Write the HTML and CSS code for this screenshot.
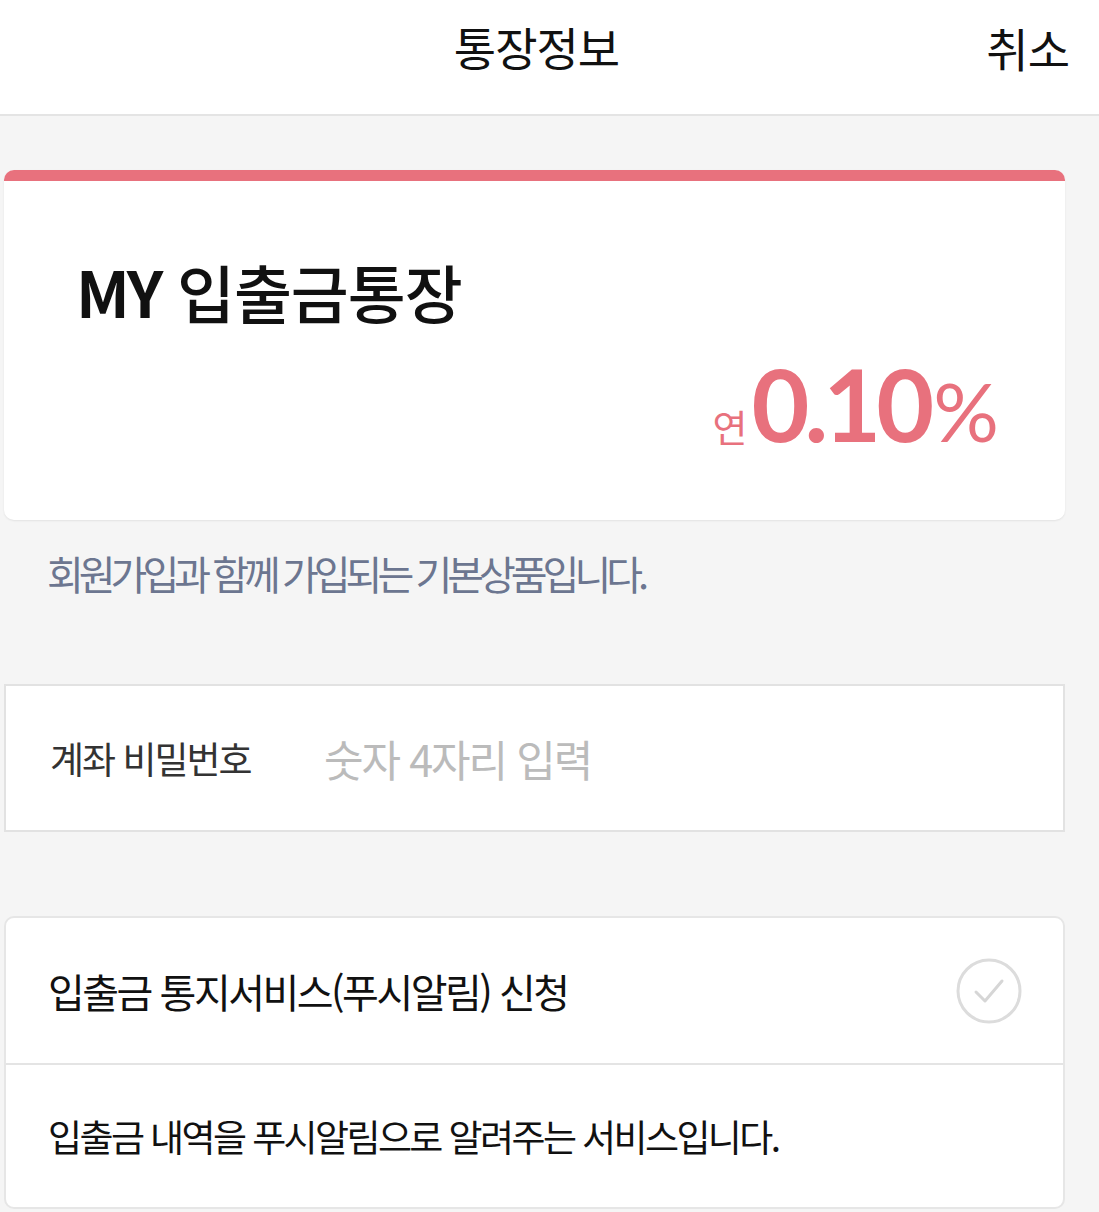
FILE: index.html
```html
<!DOCTYPE html>
<html lang="ko">
<head>
  <meta charset="UTF-8">
  <meta name="viewport" content="width=device-width, initial-scale=1.0">
  <title>통장정보</title>
  <link rel="stylesheet" href="styles.css">
</head>
<body>
  <header class="topbar">
    <h1 class="topbar-title">통장정보</h1>
    <button type="button" class="topbar-cancel">취소</button>
  </header>

  <main class="content">
    <section class="product-card">
      <div class="product-bar"></div>
      <h2 class="product-name"><span class="product-tag">MY</span> 입출금통장</h2>
      <div class="product-rate">
        <span class="rate-label">연</span><span class="rate-value">0.10</span><span class="rate-unit">%</span>
      </div>
    </section>

    <p class="product-desc">회원가입과 함께 가입되는 기본상품입니다.</p>

    <div class="password-box">
      <label class="password-label" for="accountPw">계좌 비밀번호</label>
      <input type="password" id="accountPw" class="password-input" placeholder="숫자 4자리 입력" maxlength="4">
    </div>

    <section class="notify-card">
      <div class="notify-row">
        <span class="notify-title">입출금 통지서비스(푸시알림) 신청</span>
        <svg class="check-icon" width="68" height="68" viewBox="0 0 68 68">
          <circle cx="34" cy="34" r="31" fill="none" stroke="#dcdcdc" stroke-width="3"/>
          <path d="M21 35 L30 44 L47 24" fill="none" stroke="#d6d6d6" stroke-width="3" stroke-linecap="round" stroke-linejoin="round"/>
        </svg>
      </div>
      <div class="notify-desc">입출금 내역을 푸시알림으로 알려주는 서비스입니다.</div>
    </section>
  </main>
</body>
</html>
```

FILE: styles.css
```css
* {
  box-sizing: border-box;
}
body {
  margin: 0;
  background: #f5f5f5;
  font-family: "Noto Sans CJK KR", "Noto Sans", sans-serif;
  color: #111;
}
.topbar {
  height: 116px;
  background: #fff;
  border-bottom: 2px solid #e4e4e4;
  display: flex;
  align-items: center;
  justify-content: center;
  position: relative;
}
.topbar-title {
  margin: 0 26px 22px 0;
  font-size: 46px;
  font-weight: 400;
  letter-spacing: -1px;
}
.topbar-cancel {
  position: absolute;
  right: 30px;
  top: 14px;
  background: none;
  border: none;
  padding: 0;
  font-family: inherit;
  font-size: 46px;
  letter-spacing: -1px;
  color: #111;
}
.content {
  padding: 54px 34px 0 4px;
}
.product-card {
  background: #fff;
  border-radius: 10px;
  overflow: hidden;
  height: 350px;
  box-shadow: 0 1px 2px rgba(0, 0, 0, 0.08);
}
.product-bar {
  height: 11px;
  background: #e8717d;
}
.product-name {
  margin: 72px 0 0 72px;
  font-size: 63px;
  font-weight: 500;
  letter-spacing: -1px;
  line-height: 1.2;
}
.product-tag {
  font-weight: 700;
  letter-spacing: -3px;
}
.product-rate {
  display: flex;
  justify-content: flex-end;
  align-items: baseline;
  padding-right: 66px;
  margin-top: 14px;
  color: #e8717d;
  line-height: 1.2;
}
.rate-label {
  font-size: 38px;
  margin-right: 4px;
}
.rate-value {
  font-family: Lato, "Noto Sans", sans-serif;
  font-size: 100px;
  font-weight: 700;
  letter-spacing: -5px;
}
.rate-unit {
  font-family: Lato, "Noto Sans", sans-serif;
  font-size: 82px;
  font-weight: 400;
  margin-left: 4px;
}
.product-desc {
  margin: 24px 0 0 43px;
  font-size: 40px;
  letter-spacing: -5px;
  color: #6c7690;
}
.password-box {
  margin-top: 82px;
  height: 148px;
  background: #fff;
  border: 2px solid #e2e2e2;
  display: flex;
  align-items: center;
  padding-left: 44px;
}
.password-label {
  font-size: 37px;
  letter-spacing: -2px;
  color: #333;
  width: 272px;
}
.password-input {
  border: none;
  outline: none;
  font-family: inherit;
  font-size: 43px;
  letter-spacing: -2px;
  flex: 1;
  background: transparent;
}
.password-input::placeholder {
  color: #bbb;
}
.notify-card {
  margin-top: 84px;
  background: #fff;
  border: 2px solid #e6e6e6;
  border-radius: 10px;
}
.notify-row {
  height: 147px;
  display: flex;
  align-items: center;
  justify-content: space-between;
  padding: 0 40px 0 42px;
  border-bottom: 2px solid #e4e4e4;
}
.notify-title {
  font-size: 40px;
  letter-spacing: -2.5px;
  color: #111;
}
.notify-desc {
  height: 142px;
  display: flex;
  align-items: center;
  padding-left: 42px;
  font-size: 37px;
  letter-spacing: -2.6px;
  color: #111;
}
```
